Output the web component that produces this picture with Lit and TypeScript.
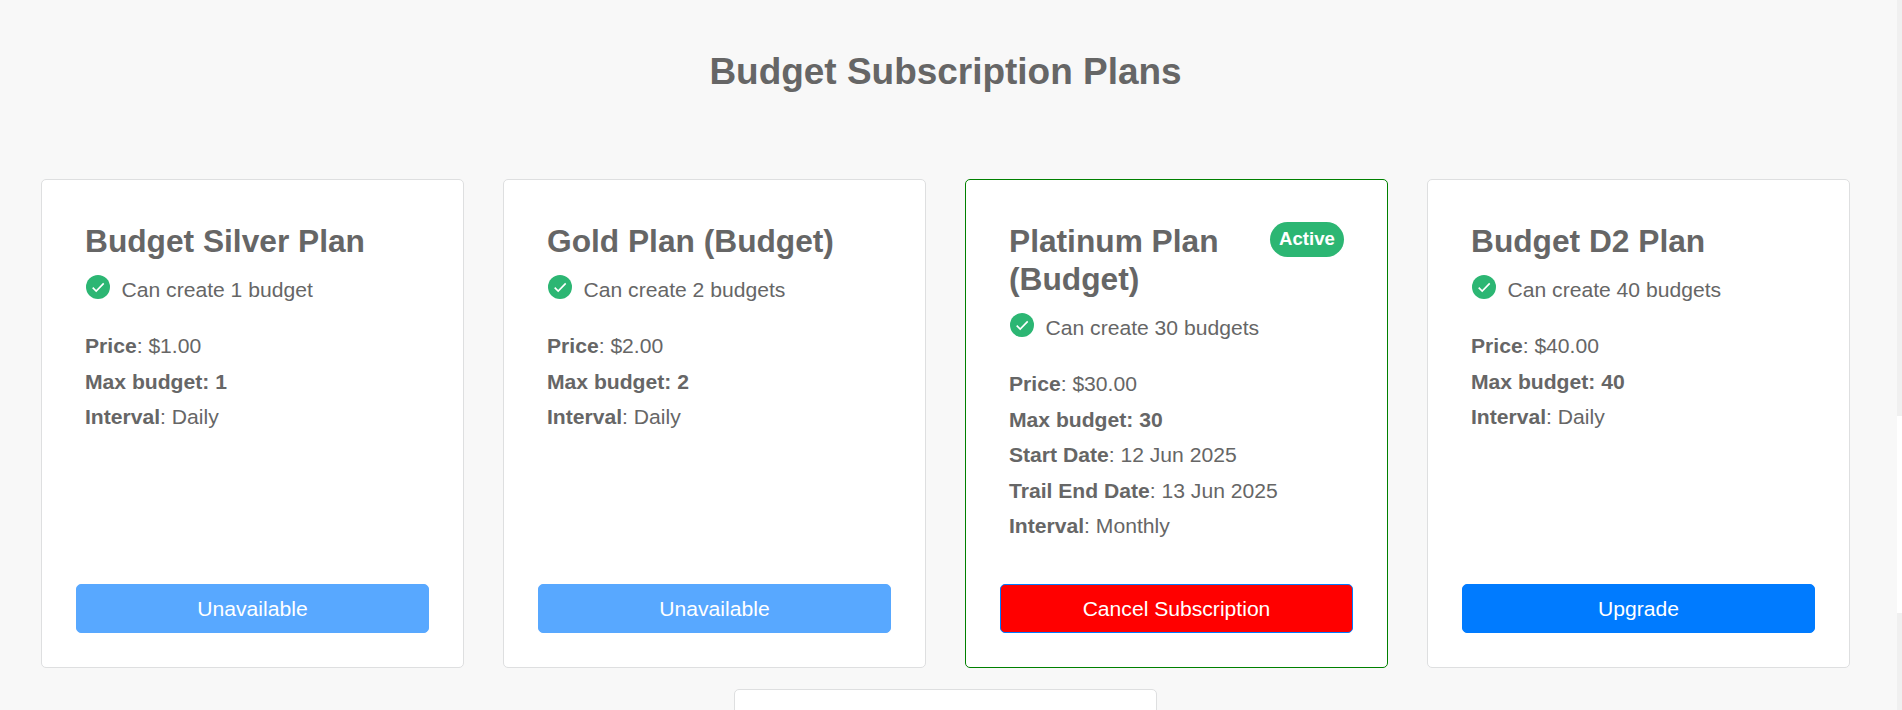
import { LitElement, html, css, nothing } from "lit";
import { customElement, property } from "lit/decorators.js";
import { classMap } from "lit/directives/class-map.js";

interface Plan {
  name: string;
  feature: string;
  price: string;
  max: number;
  start?: string;
  trialEnd?: string;
  interval: string;
  state: "unavailable" | "active" | "available";
}

const PLANS: Plan[] = [
  { name: "Budget Silver Plan", feature: "Can create 1 budget", price: "$1.00", max: 1, interval: "Daily", state: "unavailable" },
  { name: "Gold Plan (Budget)", feature: "Can create 2 budgets", price: "$2.00", max: 2, interval: "Daily", state: "unavailable" },
  {
    name: "Platinum Plan (Budget)", feature: "Can create 30 budgets", price: "$30.00", max: 30,
    start: "12 Jun 2025", trialEnd: "13 Jun 2025", interval: "Monthly", state: "active",
  },
  { name: "Budget D2 Plan", feature: "Can create 40 budgets", price: "$40.00", max: 40, interval: "Daily", state: "available" },
];

const LABELS = { unavailable: "Unavailable", active: "Cancel Subscription", available: "Upgrade" };

@customElement("plan-card")
class PlanCard extends LitElement {
  @property({ attribute: false }) plan?: Plan;

  static styles = css`
    :host { display: block; width: 423px; height: 489px; }
    .card {
      box-sizing: border-box; height: 100%; display: flex; flex-direction: column;
      padding: 42px 34px 34px; background: #fff;
      border: 1px solid #dedfe0; border-radius: 5px;
    }
    .card.active { border-color: #008000; }
    .body { padding: 0 9px; }
    .head { display: flex; justify-content: space-between; align-items: flex-start; }
    h2 { margin: 0; font-size: 31.7px; line-height: 38px; font-weight: 700; }
    .badge {
      flex: none; box-sizing: border-box; width: 74px; height: 35px; border-radius: 17.5px;
      background: #2cb673; color: #fff; text-align: center;
      font-size: 18.6px; line-height: 33px; font-weight: 700;
    }
    .feature { display: flex; gap: 11.5px; margin-top: 12px; height: 36px; line-height: 36px; }
    .check { width: 24px; height: 24px; margin: 3px 0 0 1px; flex: none; }
    .details { margin-top: 20px; line-height: 35.6px; }
    .button {
      margin-top: auto; box-sizing: border-box; height: 49px; width: 100%;
      border: 1px solid #007bff; border-radius: 5px; background: #007bff; color: #fff;
      font: inherit; line-height: 1; padding: 0; display: block;
    }
    .button.unavailable { opacity: 0.65; }
    .button.active { background: #f00; }
  `;

  private row(label: string, value?: string) {
    return value ? html`<div><b>${label}</b>: ${value}</div>` : nothing;
  }

  render() {
    const p = this.plan;
    if (!p) return nothing;
    return html`
      <article class=${classMap({ card: true, active: p.state === "active" })}>
        <div class="body">
          <div class="head">
            <h2>${p.name}</h2>
            ${p.state === "active" ? html`<span class="badge">Active</span>` : nothing}
          </div>
          <div class="feature">
            <svg class="check" viewBox="0 0 24 24">
              <circle cx="12" cy="12" r="12" fill="#2cb673" />
              <path d="M6.7 12.6 L10.2 16.1 L17.7 8.4" fill="none" stroke="#fff" stroke-width="1.6" />
            </svg>
            <span>${p.feature}</span>
          </div>
          <div class="details">
            ${this.row("Price", p.price)}
            <div><b>Max budget: ${p.max}</b></div>
            ${this.row("Start Date", p.start)} ${this.row("Trail End Date", p.trialEnd)}
            ${this.row("Interval", p.interval)}
          </div>
        </div>
        <button class="button ${p.state}" ?disabled=${p.state === "unavailable"}>${LABELS[p.state]}</button>
      </article>
    `;
  }
}

@customElement("app-root")
class AppRoot extends LitElement {
  static styles = css`
    :host {
      display: flex; height: 710px; overflow: hidden; background: #f8f8f8; color: #666;
      font-family: "Liberation Sans", Arial, sans-serif; font-size: 21.12px;
    }
    .page { width: 1891px; flex: none; }
    h1 { margin: 0; padding-top: 50px; height: 129px; text-align: center; font-size: 36.96px; line-height: 44px; }
    .plans { display: flex; flex-wrap: wrap; justify-content: center; gap: 21px 39px; }
    .next {
      box-sizing: border-box; width: 423px; height: 489px; background: #fff;
      border: 1px solid #dedfe0; border-radius: 5px;
    }
    .scrollbar { margin-left: auto; width: 5px; background: #f0f0f0; padding-top: 416px; box-sizing: border-box; }
    .thumb { height: 197px; background: #fff; }
  `;

  render() {
    return html`
      <main class="page">
        <h1>Budget Subscription Plans</h1>
        <section class="plans">
          ${PLANS.map((plan) => html`<plan-card .plan=${plan}></plan-card>`)}
          <div class="next"></div>
        </section>
      </main>
      <div class="scrollbar"><div class="thumb"></div></div>
    `;
  }
}
